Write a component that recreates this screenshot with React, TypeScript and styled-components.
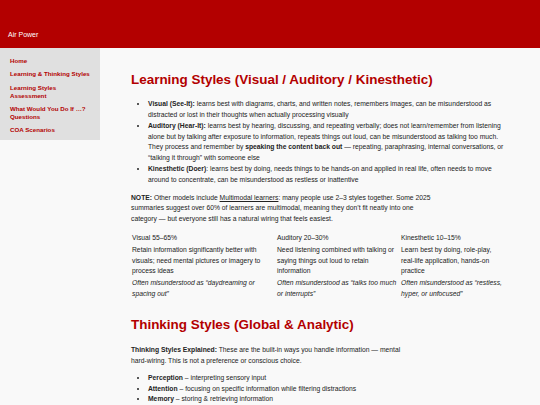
import * as React from "react";
import { createGlobalStyle, styled } from "styled-components";

const red = "#b30000";

interface StyleColumn {
    title: string;
    description: string;
    misread: string;
}

const columns: StyleColumn[] = [
    {
        title: "Visual 55–65%",
        description: "Retain information significantly better with visuals; need mental pictures or imagery to process ideas",
        misread: "Often misunderstood as “daydreaming or spacing out”",
    },
    {
        title: "Auditory 20–30%",
        description: "Need listening combined with talking or saying things out loud to retain information",
        misread: "Often misunderstood as “talks too much or interrupts”",
    },
    {
        title: "Kinesthetic 10–15%",
        description: "Learn best by doing, role-play, real-life application, hands-on practice",
        misread: "Often misunderstood as “restless, hyper, or unfocused”",
    },
];

const navLinks = [
    "Home",
    "Learning & Thinking Styles",
    "Learning Styles Assessment",
    "What Would You Do If …? Questions",
    "COA Scenarios",
];

export default function App() {
    return (
        <>
            <GlobalStyle />
            <Header>
                <SiteName>Air Power</SiteName>
            </Header>
            <Layout>
                <Sidebar>
                    <NavList>
                        {navLinks.map((link) => (
                            <NavItem key={link}>{link}</NavItem>
                        ))}
                    </NavList>
                </Sidebar>
                <Main>
                    <Heading>Learning Styles (Visual / Auditory / Kinesthetic)</Heading>
                    <BulletList>
                        <li>
                            <b>Visual (See-It):</b> learns best with diagrams, charts, and written notes, remembers images, can be
                            misunderstood as distracted or lost in their thoughts when actually processing visually
                        </li>
                        <li>
                            <b>Auditory (Hear-It):</b> learns best by hearing, discussing, and repeating verbally; does not
                            learn/remember from listening alone but by talking after exposure to information, repeats things out
                            loud, can be misunderstood as talking too much. They process and remember by{" "}
                            <b>speaking the content back out</b> — repeating, paraphrasing, internal conversations, or “talking it
                            through” with someone else
                        </li>
                        <li>
                            <b>Kinesthetic (Doer)</b>: learns best by doing, needs things to be hands-on and applied in real life,
                            often needs to move around to concentrate, can be misunderstood as restless or inattentive
                        </li>
                    </BulletList>
                    <Note>
                        <b>NOTE:</b> Other models include <Underlined>Multimodal learners</Underlined>: many people use 2–3 styles
                        together. Some 2025 summaries suggest over 60% of learners are multimodal, meaning they don’t fit neatly
                        into one category — but everyone still has a natural wiring that feels easiest.
                    </Note>
                    <StyleTable>
                        {columns.map((col) => (
                            <TableHead key={col.title}>{col.title}</TableHead>
                        ))}
                        {columns.map((col) => (
                            <TableCell key={col.title}>{col.description}</TableCell>
                        ))}
                        {columns.map((col) => (
                            <TableCell key={col.title} $italic>
                                {col.misread}
                            </TableCell>
                        ))}
                    </StyleTable>
                    <Heading $top={17}>Thinking Styles (Global &amp; Analytic)</Heading>
                    <Explained>
                        <b>Thinking Styles Explained:</b> These are the built-in ways you handle information — mental{" "}
                        <NoWrap>hard-wiring.</NoWrap> This is not a preference or conscious choice.
                    </Explained>
                    <BulletList $top={6.3}>
                        <li>
                            <b>Perception</b> – interpreting sensory input
                        </li>
                        <li>
                            <b>Attention</b> – focusing on specific information while filtering distractions
                        </li>
                        <li>
                            <b>Memory</b> – storing &amp; retrieving information
                        </li>
                    </BulletList>
                </Main>
            </Layout>
        </>
    );
}

const GlobalStyle = createGlobalStyle`
    html, body {
        margin: 0;
        padding: 0;
        background: #f9f9f9;
        font-family: "Liberation Sans", Arial, sans-serif;
        color: #222;
    }
`;

const Header = styled.header`
    height: 48px;
    background: ${red};
    display: flex;
    align-items: flex-end;
    padding: 0 8px 9px;
    box-sizing: border-box;
`;

const SiteName = styled.div`
    color: #fff;
    font-size: 7px;
    line-height: 9px;
`;

const Layout = styled.div`
    display: flex;
    align-items: flex-start;
`;

const Sidebar = styled.nav`
    width: 100px;
    flex: none;
    background: #e0e0e0;
    padding: 9px 8px 6px 10px;
    box-sizing: border-box;
`;

const NavList = styled.ul`
    list-style: none;
    margin: 0;
    padding: 0;
    display: flex;
    flex-direction: column;
    gap: 5.3px;
`;

const NavItem = styled.li`
    color: ${red};
    font-weight: bold;
    font-size: 6.2px;
    line-height: 8px;
`;

const Main = styled.main`
    flex: 1;
    padding: 23.5px 20px 0 31px;
    font-size: 6.75px;
    line-height: 10.75px;
`;

const Heading = styled.h1<{ $top?: number }>`
    margin: ${(p) => p.$top ?? 0}px 0 0;
    color: ${red};
    font-size: 13.45px;
    line-height: 15.5px;
    font-weight: bold;
`;

const BulletList = styled.ul<{ $top?: number }>`
    margin: ${(p) => p.$top ?? 12.3}px 0 0;
    padding-left: 17px;
    max-width: 375px;
    box-sizing: border-box;
    list-style: disc;
`;

const Note = styled.p`
    margin: 7.3px 0 0;
    max-width: 305px;
`;

const Underlined = styled.span`
    text-decoration: underline;
`;

const NoWrap = styled.span`
    white-space: nowrap;
`;

const StyleTable = styled.div`
    display: grid;
    grid-template-columns: 145px 124px 108px;
    row-gap: 1.3px;
    margin: 8px 0 0 1px;
`;

const TableHead = styled.div`
    padding-right: 4px;
`;

const TableCell = styled.div<{ $italic?: boolean }>`
    padding-right: 4px;
    font-style: ${(p) => (p.$italic ? "italic" : "normal")};
`;

const Explained = styled.p`
    margin: 12.6px 0 0;
    max-width: 305px;
`;
